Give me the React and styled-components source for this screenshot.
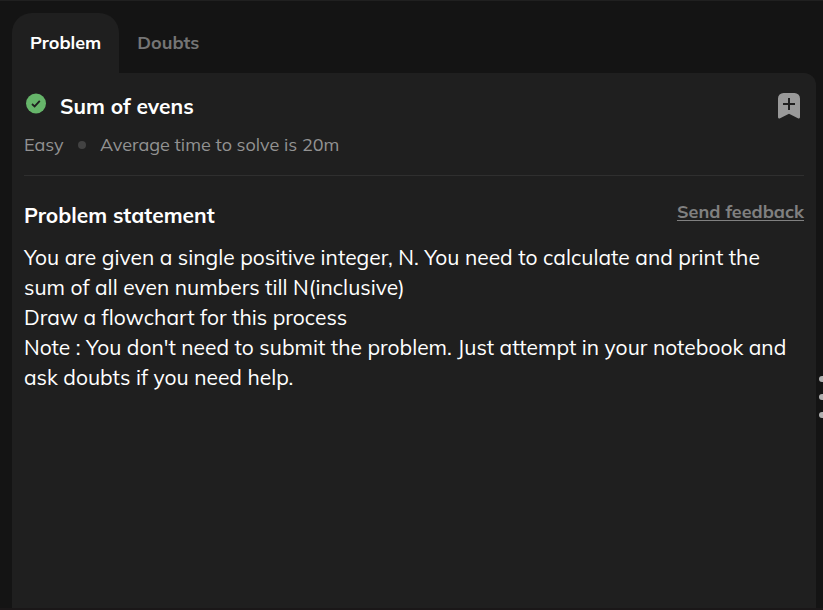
import React from "react";
import styled, { createGlobalStyle } from "styled-components";

const GlobalStyle = createGlobalStyle`
  *, *::before, *::after { box-sizing: border-box; }
  body {
    margin: 0;
    background: #141414;
    color: #fff;
    font-family: Mulish, Muli, Lato, sans-serif;
    overflow: hidden;
  }
  h1, h2, p { margin: 0; }
`;

const Page = styled.div`
  width: 823px;
  height: 610px;
  display: flex;
  flex-direction: column;
  padding: 12px 0 0 12px;
  border-top: 1px solid #202020;
  border-bottom: 2px solid #1a1718;
`;

const Tabs = styled.nav`
  display: flex;
  height: 60px;
  flex: none;
`;

const Tab = styled.button`
  height: 60px;
  padding: 0 18px;
  border: 0;
  border-radius: 20px 20px 0 0;
  background: ${(p) => (p.$active ? "#1f1f1f" : "transparent")};
  color: ${(p) => (p.$active ? "#fff" : "#757575")};
  font: 700 18px/24px Mulish, Muli, Lato, sans-serif;
  white-space: nowrap;
`;

const Workspace = styled.div`
  display: flex;
  flex: 1;
  min-height: 0;
`;

const Panel = styled.main`
  width: 804px;
  flex: none;
  padding: 18px 12px 0;
  border-radius: 0 12px 0 0;
  background: #1f1f1f;
`;

const Resizer = styled.div`
  width: 7px;
  padding: 303px 0 0 3px;
  display: flex;
  flex-direction: column;
  gap: 12px;
  overflow: hidden;
`;

const Grip = styled.span`
  width: 6px;
  height: 6px;
  flex: none;
  border-radius: 50%;
  background: #b0b0b0;
`;

const Header = styled.header`
  height: 85px;
  border-bottom: 1px solid #2f2f2f;
`;

const TitleRow = styled.div`
  display: flex;
  align-items: flex-start;
  height: 40px;
`;

const StatusIcon = styled.svg`
  width: 20px;
  height: 21px;
  margin: 2px 14px 0 2px;
`;

const BookmarkIcon = styled.svg`
  width: 22px;
  height: 26px;
  margin: 2px 4px 0 auto;
`;

const Title = styled.h1`
  font-size: 21px;
  line-height: 30px;
  font-weight: 700;
`;

const Meta = styled.div`
  display: flex;
  align-items: center;
  height: 28px;
  color: #929292;
  font-size: 18px;
  line-height: 28px;
  white-space: nowrap;
`;

const Difficulty = styled.span`
  width: 54px;
`;

const Separator = styled.span`
  width: 8px;
  height: 8px;
  margin: -1px 14px 0 0;
  border-radius: 50%;
  background: #424242;
`;

const StatementHeader = styled.div`
  display: flex;
  justify-content: space-between;
  align-items: flex-start;
  height: 66px;
  padding-top: 24px;
`;

const Feedback = styled.a`
  margin-top: 1px;
  color: #808080;
  font-size: 18px;
  line-height: 22px;
  font-weight: 700;
  text-decoration: underline;
  text-decoration-thickness: 1px;
  text-underline-offset: 2px;
`;

const Line = styled.p`
  font-size: 21px;
  line-height: 30px;
  letter-spacing: 0.013px;
`;

const lines = [
  "You are given a single positive integer, N. You need to calculate and print the sum of all even numbers till N(inclusive)",
  "Draw a flowchart for this process",
  "Note : You don't need to submit the problem. Just attempt in your notebook and ask doubts if you need help.",
];

export default function App() {
  return (
    <>
      <GlobalStyle />
      <Page>
        <Tabs>
          <Tab $active>Problem</Tab>
          <Tab>Doubts</Tab>
        </Tabs>
        <Workspace>
          <Panel>
            <Header>
              <TitleRow>
                <StatusIcon viewBox="0 0 20 21" aria-label="Solved">
                  <circle cx="10" cy="10.5" r="10" fill="#66b56a" />
                  <path d="M6 11 8.6 13.4 13.8 7.8" fill="none" stroke="#1f1f1f" strokeWidth="1.8" />
                </StatusIcon>
                <Title>Sum of evens</Title>
                <BookmarkIcon viewBox="0 0 22 26" aria-label="Bookmark">
                  <path d="M5.500 0h11A5.500 5.500 0 0 1 22 5.500v18.400c0 1.300-1 1.900-2.100 1.300L11 20.800l-8.900 4.400C1 25.800 0 25.200 0 23.900V5.500A5.500 5.500 0 0 1 5.500 0z" fill="#999" />
                  <path d="M11 5v12M5 11h12" stroke="#1f1f1f" strokeWidth="2" />
                </BookmarkIcon>
              </TitleRow>
              <Meta>
                <Difficulty>Easy</Difficulty>
                <Separator />
                <span>Average time to solve is 20m</span>
              </Meta>
            </Header>
            <StatementHeader>
              <Title as="h2">Problem statement</Title>
              <Feedback>Send feedback</Feedback>
            </StatementHeader>
            {lines.map((text) => (
              <Line key={text}>{text}</Line>
            ))}
          </Panel>
          <Resizer>
            <Grip />
            <Grip />
            <Grip />
          </Resizer>
        </Workspace>
      </Page>
    </>
  );
}
